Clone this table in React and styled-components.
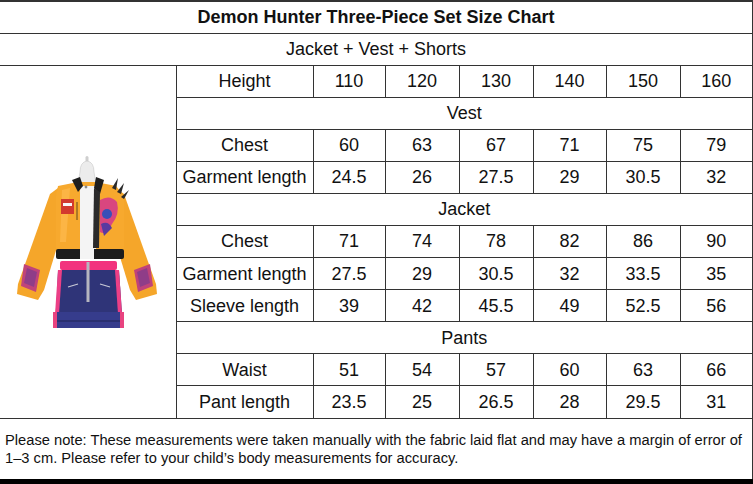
import styled, { createGlobalStyle } from "styled-components"

const GlobalStyle = createGlobalStyle`
body {
  margin: 0;
  background: #ffffff;
  font-family: 'Liberation Sans', Arial, sans-serif;
}
`

const Page = styled.div`
width: 753px;
height: 484px;
box-sizing: border-box;
border-bottom: 5px solid #000000;
overflow: hidden;
`

const Chart = styled.table`
width: 753px;
border-collapse: collapse;
table-layout: fixed;
color: #111111;
border-top: 2px solid #333333;
border-right: 2px solid #333333;
`

const Col = styled.col`
width: ${(p) => p.$w}px;
`

const Row = styled.tr`
height: ${(p) => p.$h || 32}px;
`

const Cell = styled.td`
border: 1px solid #333333;
padding: 0;
text-align: center;
vertical-align: middle;
font-size: 18px;
line-height: 20px;
white-space: nowrap;
`

const TitleCell = styled(Cell)`
font-weight: 700;
font-size: 18px;
border-left: none;
`

const SubCell = styled(Cell)`
border-left: none;
`

const PhotoCell = styled(Cell)`
border-left: none;
`

const NoteCell = styled(Cell)`
border-left: none;
text-align: left;
white-space: normal;
font-size: 14.7px;
line-height: 18px;
padding: 0 1px 0 5px;
`

const Drawing = styled.svg`
display: block;
`

const colWidths = [176, 137, 72, 74, 74, 73, 74, 73]

const sizes = [110, 120, 130, 140, 150, 160]

const sections = [
  {
    name: "Vest",
    rows: [
      ["Chest", [60, 63, 67, 71, 75, 79]],
      ["Garment length", [24.5, 26, 27.5, 29, 30.5, 32]],
    ],
  },
  {
    name: "Jacket",
    rows: [
      ["Chest", [71, 74, 78, 82, 86, 90]],
      ["Garment length", [27.5, 29, 30.5, 32, 33.5, 35]],
      ["Sleeve length", [39, 42, 45.5, 49, 52.5, 56]],
    ],
  },
  {
    name: "Pants",
    rows: [
      ["Waist", [51, 54, 57, 60, 63, 66]],
      ["Pant length", [23.5, 25, 26.5, 28, 29.5, 31]],
    ],
  },
]

// drawing of the three-piece outfit on its mannequin
const Outfit = () => (
  <Drawing width="176" height="352" viewBox="0 64 176 352">
    {/* mannequin */}
    <rect x="85.5" y="154" width="3" height="6" rx="1.5" fill="#cfcfcf" />
    <path d="M80 170 Q80 160 87 159 Q94 160 94 170 L96 182 L78 182 Z" fill="#ececec" stroke="#c8c8c8" strokeWidth="0.6" />
    {/* sleeves */}
    <path d="M58 186 L50 192 L18 282 L17 292 L38 298 L44 288 L64 222 Z" fill="#f5a62a" />
    <path d="M116 186 L124 192 L156 282 L157 292 L136 298 L130 288 L110 222 Z" fill="#f5a62a" />
    <path d="M24 262 L40 268 L36 290 L21 284 Z" fill="#c0437a" />
    <path d="M27 266 L37 270 L34 285 L24 281 Z" fill="#7a3a8f" opacity="0.7" />
    <path d="M150 262 L134 268 L138 290 L153 284 Z" fill="#c0437a" />
    <path d="M147 266 L137 270 L140 285 L150 281 Z" fill="#7a3a8f" opacity="0.7" />
    {/* jacket body */}
    <path d="M58 184 L78 180 L96 180 L116 184 L124 194 L124 250 L56 250 L56 194 Z" fill="#f7a92e" />
    <path d="M62 188 L70 186 L66 240 L60 240 Z" fill="#ffbe55" opacity="0.6" />
    {/* white inner top */}
    <rect x="80" y="184" width="16" height="66" fill="#f4f4f4" />
    {/* collar & placket */}
    <path d="M72 178 L80 175 L83 184 L78 190 Z" fill="#1e1e1e" />
    <path d="M96 175 L104 178 L100 192 L94 186 Z" fill="#1e1e1e" />
    <path d="M94 186 L100 190 L99 246 L93 246 Z" fill="#2a2a2a" />
    <circle cx="86" cy="185" r="1.4" fill="#888" />
    {/* hem band */}
    <rect x="56" y="247" width="68" height="10" rx="2" fill="#1c1c1c" />
    <rect x="80" y="247" width="14" height="10" fill="#f4f4f4" />
    {/* shoulder spikes */}
    <path d="M112 186 L118 176 L116 188 Z" fill="#2a2a2a" />
    <path d="M117 190 L124 181 L121 192 Z" fill="#2a2a2a" />
    <path d="M121 195 L129 188 L124 197 Z" fill="#2a2a2a" />
    {/* chest patches */}
    <path d="M100 198 Q110 192 117 200 Q120 212 112 222 Q106 234 100 230 Z" fill="#d9467f" />
    <circle cx="107" cy="212" r="5" fill="#3a4fb8" />
    <path d="M101 222 Q108 218 112 226 L104 234 Z" fill="#5a3aa0" />
    <rect x="61" y="197" width="13" height="15" fill="#d23a2e" />
    <rect x="63" y="201" width="9" height="3" fill="#f7f7f7" />
    <rect x="76" y="200" width="2" height="18" fill="#7a5a20" opacity="0.6" />
    {/* shorts */}
    <rect x="60" y="259" width="57" height="9" rx="2" fill="#f2337e" />
    <path d="M58 268 L119 268 L122 312 L56 312 Z" fill="#2f3478" />
    <path d="M58 268 L62 268 L59 312 L55 312 Z" fill="#ec3f86" />
    <path d="M115 268 L119 268 L122 312 L118 312 Z" fill="#ec3f86" />
    <rect x="53" y="310" width="71" height="16" rx="2" fill="#363c8c" />
    <rect x="53" y="318" width="71" height="2" fill="#2a2f70" />
    <rect x="53" y="310" width="4" height="16" fill="#e8437f" />
    <rect x="120" y="310" width="4" height="16" fill="#e8437f" />
    <rect x="86.5" y="260" width="3" height="40" fill="#b5b5c0" />
    <path d="M68 285 L78 282" stroke="#c9c9d6" strokeWidth="1.2" />
    <path d="M100 282 L110 285" stroke="#c9c9d6" strokeWidth="1.2" />
  </Drawing>
)

const App = () => {
  return (
    <Page>
      <GlobalStyle />
      <Chart>
        <colgroup>
          {colWidths.map((w, i) => (
            <Col key={i} $w={w} />
          ))}
        </colgroup>
        <tbody>
          <Row>
            <TitleCell colSpan={8}>Demon Hunter Three-Piece Set Size Chart</TitleCell>
          </Row>
          <Row>
            <SubCell colSpan={8}>Jacket + Vest + Shorts</SubCell>
          </Row>
          <Row>
            <PhotoCell rowSpan={11}>
              <Outfit />
            </PhotoCell>
            <Cell>Height</Cell>
            {sizes.map((s) => (
              <Cell key={s}>{s}</Cell>
            ))}
          </Row>
          {sections.map((sec) => [
            <Row key={sec.name}>
              <Cell colSpan={7}>{sec.name}</Cell>
            </Row>,
            ...sec.rows.map(([label, vals]) => (
              <Row key={sec.name + label}>
                <Cell>{label}</Cell>
                {vals.map((v, i) => (
                  <Cell key={i}>{v}</Cell>
                ))}
              </Row>
            )),
          ])}
          <Row $h={61}>
            <NoteCell colSpan={8}>
              Please note: These measurements were taken manually with the fabric laid flat and may have a margin of error of 1–3 cm. Please refer to your child’s body measurements for accuracy.
            </NoteCell>
          </Row>
        </tbody>
      </Chart>
    </Page>
  )
}

export default App
